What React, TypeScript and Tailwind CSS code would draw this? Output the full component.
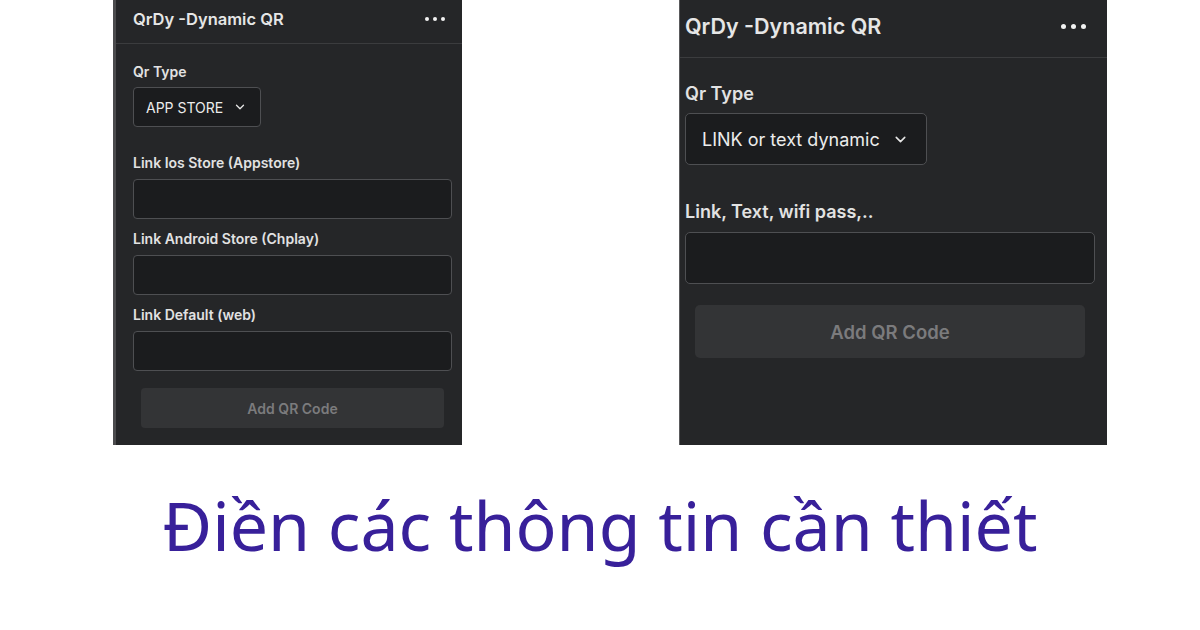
import React from "react";
import { ChevronDown } from "lucide-react";

const Dots: React.FC<{ big?: boolean }> = ({ big }) => (
  <div className={`flex items-center ${big ? "gap-[5px]" : "gap-[4px]"}`}>
    {[0, 1, 2].map((i) => (
      <span
        key={i}
        className={`rounded-full bg-[#f2f2f2] ${big ? "h-[5px] w-[5px]" : "h-[4px] w-[4px]"}`}
      />
    ))}
  </div>
);

const LeftPanel: React.FC = () => (
  <div className="w-[349px] h-[445px] shrink-0 bg-[#252628] border-l-[3px] border-[#4b4b4d] flex flex-col">
    <div className="h-[44px] flex items-center justify-between pl-[17px] pr-[17px] pb-[5px] border-b border-[#3b3c3e]">
      <span className="text-[16.5px] font-semibold text-[#e6e6e6]">QrDy -Dynamic QR</span>
      <Dots />
    </div>
    <div className="flex flex-col pl-[17px] pr-[10px] pt-[18px]">
      <label className="text-[14px] leading-[20px] font-semibold text-[#e2e2e2]">Qr Type</label>
      <div className="mt-[5px] w-[128px] h-[40px] rounded-[4px] border border-[#4e4f52] bg-[#1b1c1e] flex items-center pl-[12px] gap-[10px]">
        <span className="text-[14px] text-[#ececec]">APP STORE</span>
        <ChevronDown className="w-[14px] h-[14px] text-[#e6e6e6]" strokeWidth={2.2} />
      </div>
      <label className="mt-[26px] text-[14px] leading-[20px] font-semibold text-[#e2e2e2]">
        Link Ios Store (Appstore)
      </label>
      <div className="mt-[6px] h-[40px] rounded-[4px] border border-[#4e4f52] bg-[#1b1c1e]" />
      <label className="mt-[10px] text-[14px] leading-[20px] font-semibold text-[#e2e2e2]">
        Link Android Store (Chplay)
      </label>
      <div className="mt-[6px] h-[40px] rounded-[4px] border border-[#4e4f52] bg-[#1b1c1e]" />
      <label className="mt-[10px] text-[14px] leading-[20px] font-semibold text-[#e2e2e2]">
        Link Default (web)
      </label>
      <div className="mt-[6px] h-[40px] rounded-[4px] border border-[#4e4f52] bg-[#1b1c1e]" />
      <button className="mt-[17px] mx-[8px] h-[40px] rounded-[4px] bg-[#333436] text-[14px] font-semibold text-[#7b7b7d]">
        Add QR Code
      </button>
    </div>
  </div>
);

const RightPanel: React.FC = () => (
  <div className="w-[428px] h-[445px] shrink-0 bg-[#252628] border-l border-[#5a5a5c] flex flex-col">
    <div className="h-[58px] flex items-center justify-between pl-[5px] pr-[21px] pb-[4px] border-b border-[#3b3c3e]">
      <span className="text-[21.5px] font-semibold text-[#e6e6e6]">QrDy -Dynamic QR</span>
      <Dots big />
    </div>
    <div className="flex flex-col pl-[5px] pr-[12px] pt-[23px]">
      <label className="text-[18px] leading-[26px] font-semibold text-[#e2e2e2]">Qr Type</label>
      <div className="mt-[6px] w-[242px] h-[52px] rounded-[5px] border border-[#4e4f52] bg-[#1b1c1e] flex items-center pl-[16px] gap-[12px]">
        <span className="text-[18px] text-[#ececec]">LINK or text dynamic</span>
        <ChevronDown className="w-[17px] h-[17px] text-[#e6e6e6]" strokeWidth={2.2} />
      </div>
      <label className="mt-[34px] text-[18px] leading-[26px] font-semibold text-[#e2e2e2]">
        Link, Text, wifi pass,..
      </label>
      <div className="mt-[7px] h-[52px] rounded-[5px] border border-[#4e4f52] bg-[#1b1c1e]" />
      <button className="mt-[21px] mx-[10px] h-[53px] rounded-[5px] bg-[#333436] pt-[3px] text-[18.5px] font-semibold text-[#7b7b7d]">
        Add QR Code
      </button>
    </div>
  </div>
);

export default function App() {
  return (
    <div
      className="w-[1200px] h-[630px] bg-white overflow-hidden flex flex-col"
      style={{ fontFamily: "Inter, 'Noto Sans', sans-serif" }}
    >
      <div className="flex pl-[113px] gap-[217px]">
        <LeftPanel />
        <RightPanel />
      </div>
      <h1
        className="mt-[40px] text-center text-[68px] leading-[80px] font-normal text-[#38209a]"
        style={{ fontFamily: "'Noto Sans', sans-serif" }}
      >
        Điền các thông tin cần thiết
      </h1>
    </div>
  );
}
